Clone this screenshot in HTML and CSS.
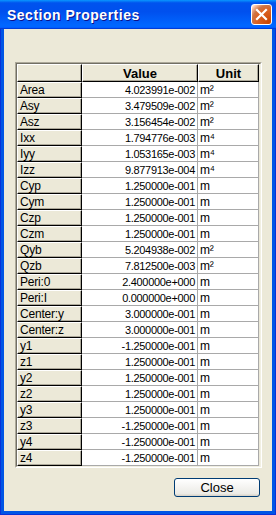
FILE: index.html
```html
<!DOCTYPE html>
<html>
<head>
<meta charset="utf-8">
<link rel="stylesheet" href="styles.css">
</head>
<body>
<div class="window">
  <div class="titlebar">
    <span class="title">Section Properties</span>
    <div class="xbtn">
      <svg width="19" height="19" viewBox="0 0 19 19"><path d="M5 5 L14 14 M14 5 L5 14" stroke="#fff" stroke-width="2.2" stroke-linecap="square" fill="none"/></svg>
    </div>
  </div>
  <div class="client">
    <div class="sunken">
      <div class="sunken-inner">
        <div class="grid">
          <div class="hd"></div><div class="hd">Value</div><div class="hd">Unit</div>
          <div class="rh">Area</div><div class="val">4.023991e-002</div><div class="unit">m²</div>
          <div class="rh">Asy</div><div class="val">3.479509e-002</div><div class="unit">m²</div>
          <div class="rh">Asz</div><div class="val">3.156454e-002</div><div class="unit">m²</div>
          <div class="rh">Ixx</div><div class="val">1.794776e-003</div><div class="unit">m⁴</div>
          <div class="rh">Iyy</div><div class="val">1.053165e-003</div><div class="unit">m⁴</div>
          <div class="rh">Izz</div><div class="val">9.877913e-004</div><div class="unit">m⁴</div>
          <div class="rh">Cyp</div><div class="val">1.250000e-001</div><div class="unit">m</div>
          <div class="rh">Cym</div><div class="val">1.250000e-001</div><div class="unit">m</div>
          <div class="rh">Czp</div><div class="val">1.250000e-001</div><div class="unit">m</div>
          <div class="rh">Czm</div><div class="val">1.250000e-001</div><div class="unit">m</div>
          <div class="rh">Qyb</div><div class="val">5.204938e-002</div><div class="unit">m²</div>
          <div class="rh">Qzb</div><div class="val">7.812500e-003</div><div class="unit">m²</div>
          <div class="rh">Peri:0</div><div class="val">2.400000e+000</div><div class="unit">m</div>
          <div class="rh">Peri:I</div><div class="val">0.000000e+000</div><div class="unit">m</div>
          <div class="rh">Center:y</div><div class="val">3.000000e-001</div><div class="unit">m</div>
          <div class="rh">Center:z</div><div class="val">3.000000e-001</div><div class="unit">m</div>
          <div class="rh">y1</div><div class="val">-1.250000e-001</div><div class="unit">m</div>
          <div class="rh">z1</div><div class="val">1.250000e-001</div><div class="unit">m</div>
          <div class="rh">y2</div><div class="val">1.250000e-001</div><div class="unit">m</div>
          <div class="rh">z2</div><div class="val">1.250000e-001</div><div class="unit">m</div>
          <div class="rh">y3</div><div class="val">1.250000e-001</div><div class="unit">m</div>
          <div class="rh">z3</div><div class="val">-1.250000e-001</div><div class="unit">m</div>
          <div class="rh">y4</div><div class="val">-1.250000e-001</div><div class="unit">m</div>
          <div class="rh">z4</div><div class="val">-1.250000e-001</div><div class="unit">m</div>
        </div>
      </div>
    </div>
    <div class="actions">
      <button class="btn">Close</button>
    </div>
  </div>
</div>
</body>
</html>
```
FILE: styles.css
```css
* { box-sizing: border-box; }
html, body { margin: 0; padding: 0; background: #fff; }
body { font-family: "Liberation Sans", Arial, sans-serif; }

.window {
  width: 276px;
  height: 515px;
  background: #0055e5;
  display: flex;
  flex-direction: column;
  border-left: 1px solid #0831d9;
  border-right: 1px solid #0831d9;
  border-bottom: 1px solid #0831d9;
}

.titlebar {
  height: 29px;
  flex: 0 0 29px;
  margin: 0 -1px;
  display: flex;
  align-items: center;
  justify-content: space-between;
  padding: 0 4px 0 7px;
  background: linear-gradient(180deg, #0997ff 0%, #0053ee 10%, #0050ee 40%, #0066ff 86%, #0066ff 92%, #005bff 95%, #003dd7 97%, #003dd7 100%);
}

.title {
  color: #fff;
  font-weight: bold;
  font-size: 14px;
  letter-spacing: 0.5px;
  text-shadow: 1px 1px #0f1089;
  line-height: 1;
}

.xbtn {
  width: 21px;
  height: 21px;
  border: 1px solid #fff;
  border-radius: 3px;
  background: radial-gradient(circle at 90% 90%, #cc4600 0%, #dc6527 55%, #cd7546 70%, #ffccb2 90%, #fff 100%);
  display: flex;
  align-items: center;
  justify-content: center;
}

.client {
  flex: 1;
  margin: 0 3px 3px 3px;
  background: #ece9d8;
  padding: 33px 0 0 11px;
  display: flex;
  flex-direction: column;
}

.sunken {
  width: 247px;
  height: 406px;
  border: 1px solid;
  border-color: #aca899 #fff #fff #aca899;
}
.sunken-inner {
  width: 100%;
  height: 100%;
  border: 1px solid;
  border-color: #716f64 #f1efe2 #f1efe2 #716f64;
  background: #ece9d8;
}

.grid {
  display: grid;
  grid-template-columns: 65px 116px 61px;
  grid-template-rows: 18px repeat(24, 16px);
  font-size: 11px;
  letter-spacing: -0.3px;
  color: #000;
}

.hd, .rh {
  background: #ece9d8;
  border-top: 1px solid #fff;
  border-left: 1px solid #fff;
  border-right: 1px solid #000;
  border-bottom: 1px solid #000;
  box-shadow: inset -1px -1px #aca899;
  display: flex;
  align-items: center;
}
.hd {
  justify-content: center;
  font-weight: bold;
  font-size: 13px;
  letter-spacing: 0;
}
.rh {
  padding-left: 2px;
  font-size: 12px;
  letter-spacing: -0.2px;
}

.val, .unit {
  background: #fff;
  border-right: 1px solid #a9a9a9;
  border-bottom: 1px solid #a9a9a9;
  display: flex;
  align-items: center;
}
.val {
  justify-content: flex-end;
  padding-right: 2px;
}
.unit {
  padding-left: 2px;
  font-size: 12px;
}

.actions {
  display: flex;
  justify-content: flex-end;
  padding-right: 12px;
  margin-top: 10px;
}

.btn {
  width: 86px;
  height: 19px;
  border: 1px solid #003c74;
  border-radius: 3px;
  background: linear-gradient(180deg, #fff 0%, #ecebe6 86%, #d6d0c5 100%);
  font-family: "Liberation Sans", Arial, sans-serif;
  font-size: 13px;
  color: #000;
  padding: 0;
  line-height: 1;
}
```
